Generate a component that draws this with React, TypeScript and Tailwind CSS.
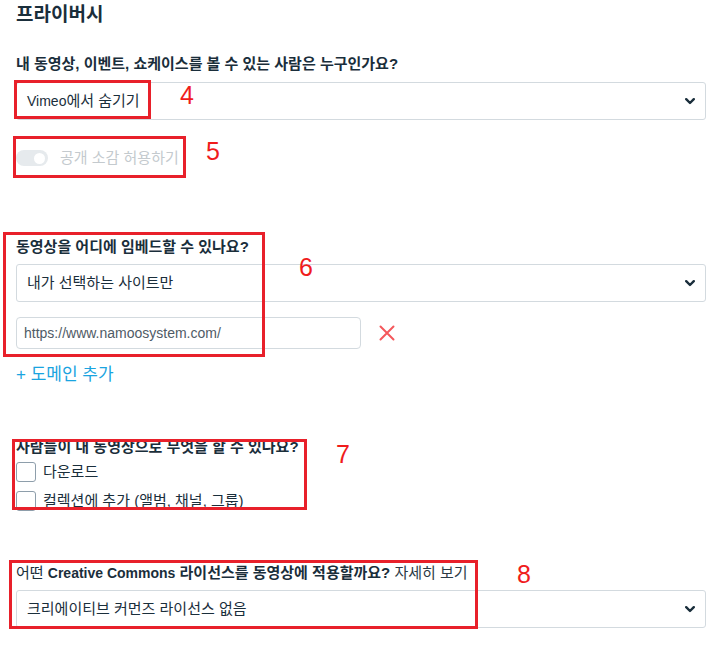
import React from "react";

const Chevron = () => (
  <svg width="10" height="7" viewBox="0 0 10 7" className="shrink-0">
    <path d="M1.2 1.2 L5 5 L8.8 1.2" fill="none" stroke="#1a2e3b" strokeWidth="2.4" strokeLinecap="round" strokeLinejoin="round" />
  </svg>
);

const Select = ({ children, className = "" }: { children: React.ReactNode; className?: string }) => (
  <div className={`flex h-[38px] items-center justify-between rounded-[3px] border border-[#d3dadf] bg-white pl-[10px] pr-[10px] text-[15px] text-[#1a2e3b] ${className}`}>
    <span>{children}</span>
    <Chevron />
  </div>
);

const Checkbox = ({ label, className = "" }: { label: string; className?: string }) => (
  <div className={`flex h-[20px] items-center gap-[7px] ${className}`}>
    <div className="h-[20px] w-[20px] rounded-[3px] border border-[#8e9eab] bg-white" />
    <span className="text-[15px] leading-[20px] text-[#1a2e3b]">{label}</span>
  </div>
);

export default function App() {
  return (
    <div className="relative h-[661px] w-[724px] overflow-hidden bg-white font-['Liberation_Sans','Noto_Sans_CJK_KR',sans-serif] text-[#1a2e3b]">
      <div className="flex flex-col pl-4 pr-[18px]">
        <h1 className="pt-[1px] text-[19px] font-bold leading-[28px]">프라이버시</h1>

        <div className="mt-[25px] text-[15px] font-bold leading-[20px]">
          내 동영상, 이벤트, 쇼케이스를 볼 수 있는 사람은 누구인가요?
        </div>
        <Select className="mt-2">
          <span className="text-[14px]">Vimeo</span>에서 숨기기
        </Select>

        <div className="mt-[28px] flex h-[20px] items-center gap-[12px]">
          <div className="flex h-[16px] w-[32px] items-center justify-end rounded-full bg-[#e6eaed] pr-[3px]">
            <div className="h-[11px] w-[11px] rounded-full bg-white" />
          </div>
          <span className="text-[15px] leading-[20px] text-[#c4cace]">공개 소감 허용하기</span>
        </div>

        <div className="mt-[69px] text-[15px] font-bold leading-[20px]">동영상을 어디에 임베드할 수 있나요?</div>
        <Select className="mt-[7px]">내가 선택하는 사이트만</Select>

        <div className="mt-[15px] flex items-center">
          <div className="flex h-[32px] w-[345px] items-center rounded-[4px] border border-[#d3dadf] bg-white pl-[7px] text-[14px] text-[#4f5b66]">
            https://www.namoosystem.com/
          </div>
          <svg width="16" height="16" viewBox="0 0 16 16" className="ml-[18px]">
            <path d="M1.5 1.5 L14.5 14.5 M14.5 1.5 L1.5 14.5" stroke="#f4585c" strokeWidth="2" strokeLinecap="round" />
          </svg>
        </div>

        <div className="mt-[14px] text-[17px] leading-[24px] text-[#1aa4e0]">+ 도메인 추가</div>

        <div className="mt-[50px] text-[15px] font-bold leading-[20px]">사람들이 내 동영상으로 무엇을 할 수 있나요?</div>
        <Checkbox label="다운로드" className="mt-[5px]" />
        <Checkbox label="컬렉션에 추가 (앨범, 채널, 그룹)" className="mt-[9px]" />

        <div className="mt-[52px] text-[15px] leading-[20px]">
          어떤 <span className="font-bold"><span className="text-[14px]">Creative Commons</span> 라이선스를 동영상에 적용할까요?</span>{" "}
          <span className="text-[#2b3a45]">자세히 보기</span>
        </div>
        <Select className="mt-[7px]">크리에이티브 커먼즈 라이선스 없음</Select>
      </div>

      {/* annotation overlays */}
      <div className="pointer-events-none absolute left-[14px] top-[80px] h-[39px] w-[137px] border-[3px] border-[#e8202a]" />
      <div className="pointer-events-none absolute left-[180px] top-[80px] text-[25px] leading-[30px] text-[#f01c1c]">4</div>

      <div className="pointer-events-none absolute left-[13px] top-[136px] h-[42px] w-[173px] border-[3px] border-[#e8202a]" />
      <div className="pointer-events-none absolute left-[206px] top-[136px] text-[25px] leading-[30px] text-[#f01c1c]">5</div>

      <div className="pointer-events-none absolute left-[3px] top-[232px] h-[125px] w-[262px] border-[3px] border-[#e8202a]" />
      <div className="pointer-events-none absolute left-[299px] top-[252px] text-[25px] leading-[30px] text-[#f01c1c]">6</div>

      <div className="pointer-events-none absolute left-[12px] top-[439px] h-[71px] w-[295px] border-[3px] border-[#e8202a]" />
      <div className="pointer-events-none absolute left-[336px] top-[439px] text-[25px] leading-[30px] text-[#f01c1c]">7</div>

      <div className="pointer-events-none absolute left-[9px] top-[560px] h-[69px] w-[469px] border-[3px] border-[#e8202a]" />
      <div className="pointer-events-none absolute left-[517px] top-[559px] text-[25px] leading-[30px] text-[#f01c1c]">8</div>
    </div>
  );
}
